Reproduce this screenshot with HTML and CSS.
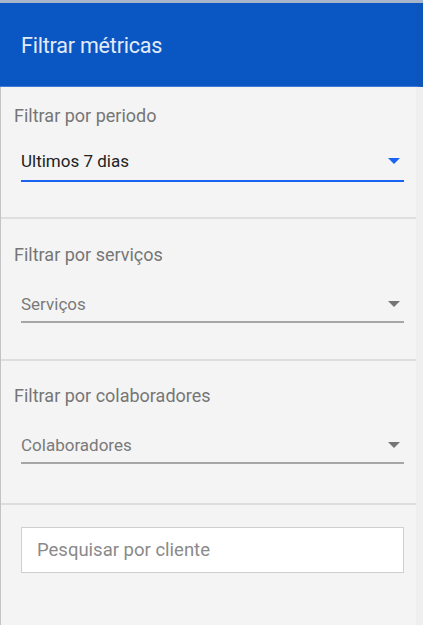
FILE: index.html
```html
<!DOCTYPE html>
<html lang="pt">
<head>
<meta charset="utf-8">
<title>Filtrar métricas</title>
<link rel="stylesheet" href="styles.css">
</head>
<body>
<div class="panel">
  <header class="header"><h1 class="title">Filtrar métricas</h1></header>
  <main class="body">
    <section class="group group-1">
      <div class="label">Filtrar por periodo</div>
      <div class="select select-active">
        <span class="select-text">Ultimos 7 dias</span>
        <svg class="arrow" width="12" height="6" viewBox="0 0 12 6"><path d="M0 0H12L6 6Z"/></svg>
      </div>
    </section>
    <section class="group group-2">
      <div class="label">Filtrar por serviços</div>
      <div class="select">
        <span class="select-text muted">Serviços</span>
        <svg class="arrow" width="12" height="6" viewBox="0 0 12 6"><path d="M0 0H12L6 6Z"/></svg>
      </div>
    </section>
    <section class="group group-3">
      <div class="label">Filtrar por colaboradores</div>
      <div class="select">
        <span class="select-text muted">Colaboradores</span>
        <svg class="arrow" width="12" height="6" viewBox="0 0 12 6"><path d="M0 0H12L6 6Z"/></svg>
      </div>
    </section>
    <section class="search-wrap">
      <input class="search" type="text" placeholder="Pesquisar por cliente">
    </section>
  </main>
</div>
</body>
</html>
```

FILE: styles.css
```css
* { box-sizing: border-box; }
html, body { margin: 0; padding: 0; }
body {
  width: 423px;
  height: 625px;
  overflow: hidden;
  font-family: Roboto, "Liberation Sans", Arial, sans-serif;
  background: #efefef;
}
.panel {
  display: flex;
  flex-direction: column;
  height: 625px;
  border-top: 3px solid #a7b6cc;
}
.header {
  height: 84px;
  flex: none;
  background: #0a57c4;
  border-bottom: 1px solid #3f7dd5;
  border-right: 7px solid #0c55bd;
  display: flex;
  align-items: center;
  padding-left: 21px;
}
.title {
  margin: 0;
  font-size: 21.5px;
  font-weight: 400;
  color: #e3ebf8;
  letter-spacing: -0.2px;
  padding-top: 1px;
}
.body {
  flex: 1;
  background: #f4f4f4;
  border-left: 1px solid #c4c4c4;
  border-right: 7px solid #efefef;
}
.group {
  padding: 0 12px 0 13px;
  border-bottom: 2px solid #dedede;
}
.group-1 { padding-top: 18px; height: 132px; }
.group-2 { padding-top: 25px; height: 142px; }
.group-3 { padding-top: 24px; height: 144px; }
.label {
  font-size: 18px;
  color: #767676;
  line-height: 22px;
}
.select {
  margin: 21px 0 0 7px;
  display: flex;
  align-items: center;
  justify-content: space-between;
  height: 36px;
  border-bottom: 2px solid #a6a6a6;
  padding-right: 4px;
}
.select-active {
  border-bottom-color: #1a62f2;
  margin-top: 15px;
  height: 40px;
}
.select-text {
  font-size: 17px;
  color: #222;
}
.select-text.muted { color: #7a7a7a; }
.arrow { fill: #757575; }
.select-active .arrow { fill: #1a62f2; }
.search-wrap {
  padding: 22px 12px 0 20px;
}
.search {
  display: block;
  width: 100%;
  height: 46px;
  border: 1px solid #cfcfcf;
  background: #fff;
  padding: 0 15px;
  font-family: Roboto, "Liberation Sans", Arial, sans-serif;
  font-size: 18.5px;
  color: #333;
  outline: none;
}
.search::placeholder { color: #8a8a8a; }
```
